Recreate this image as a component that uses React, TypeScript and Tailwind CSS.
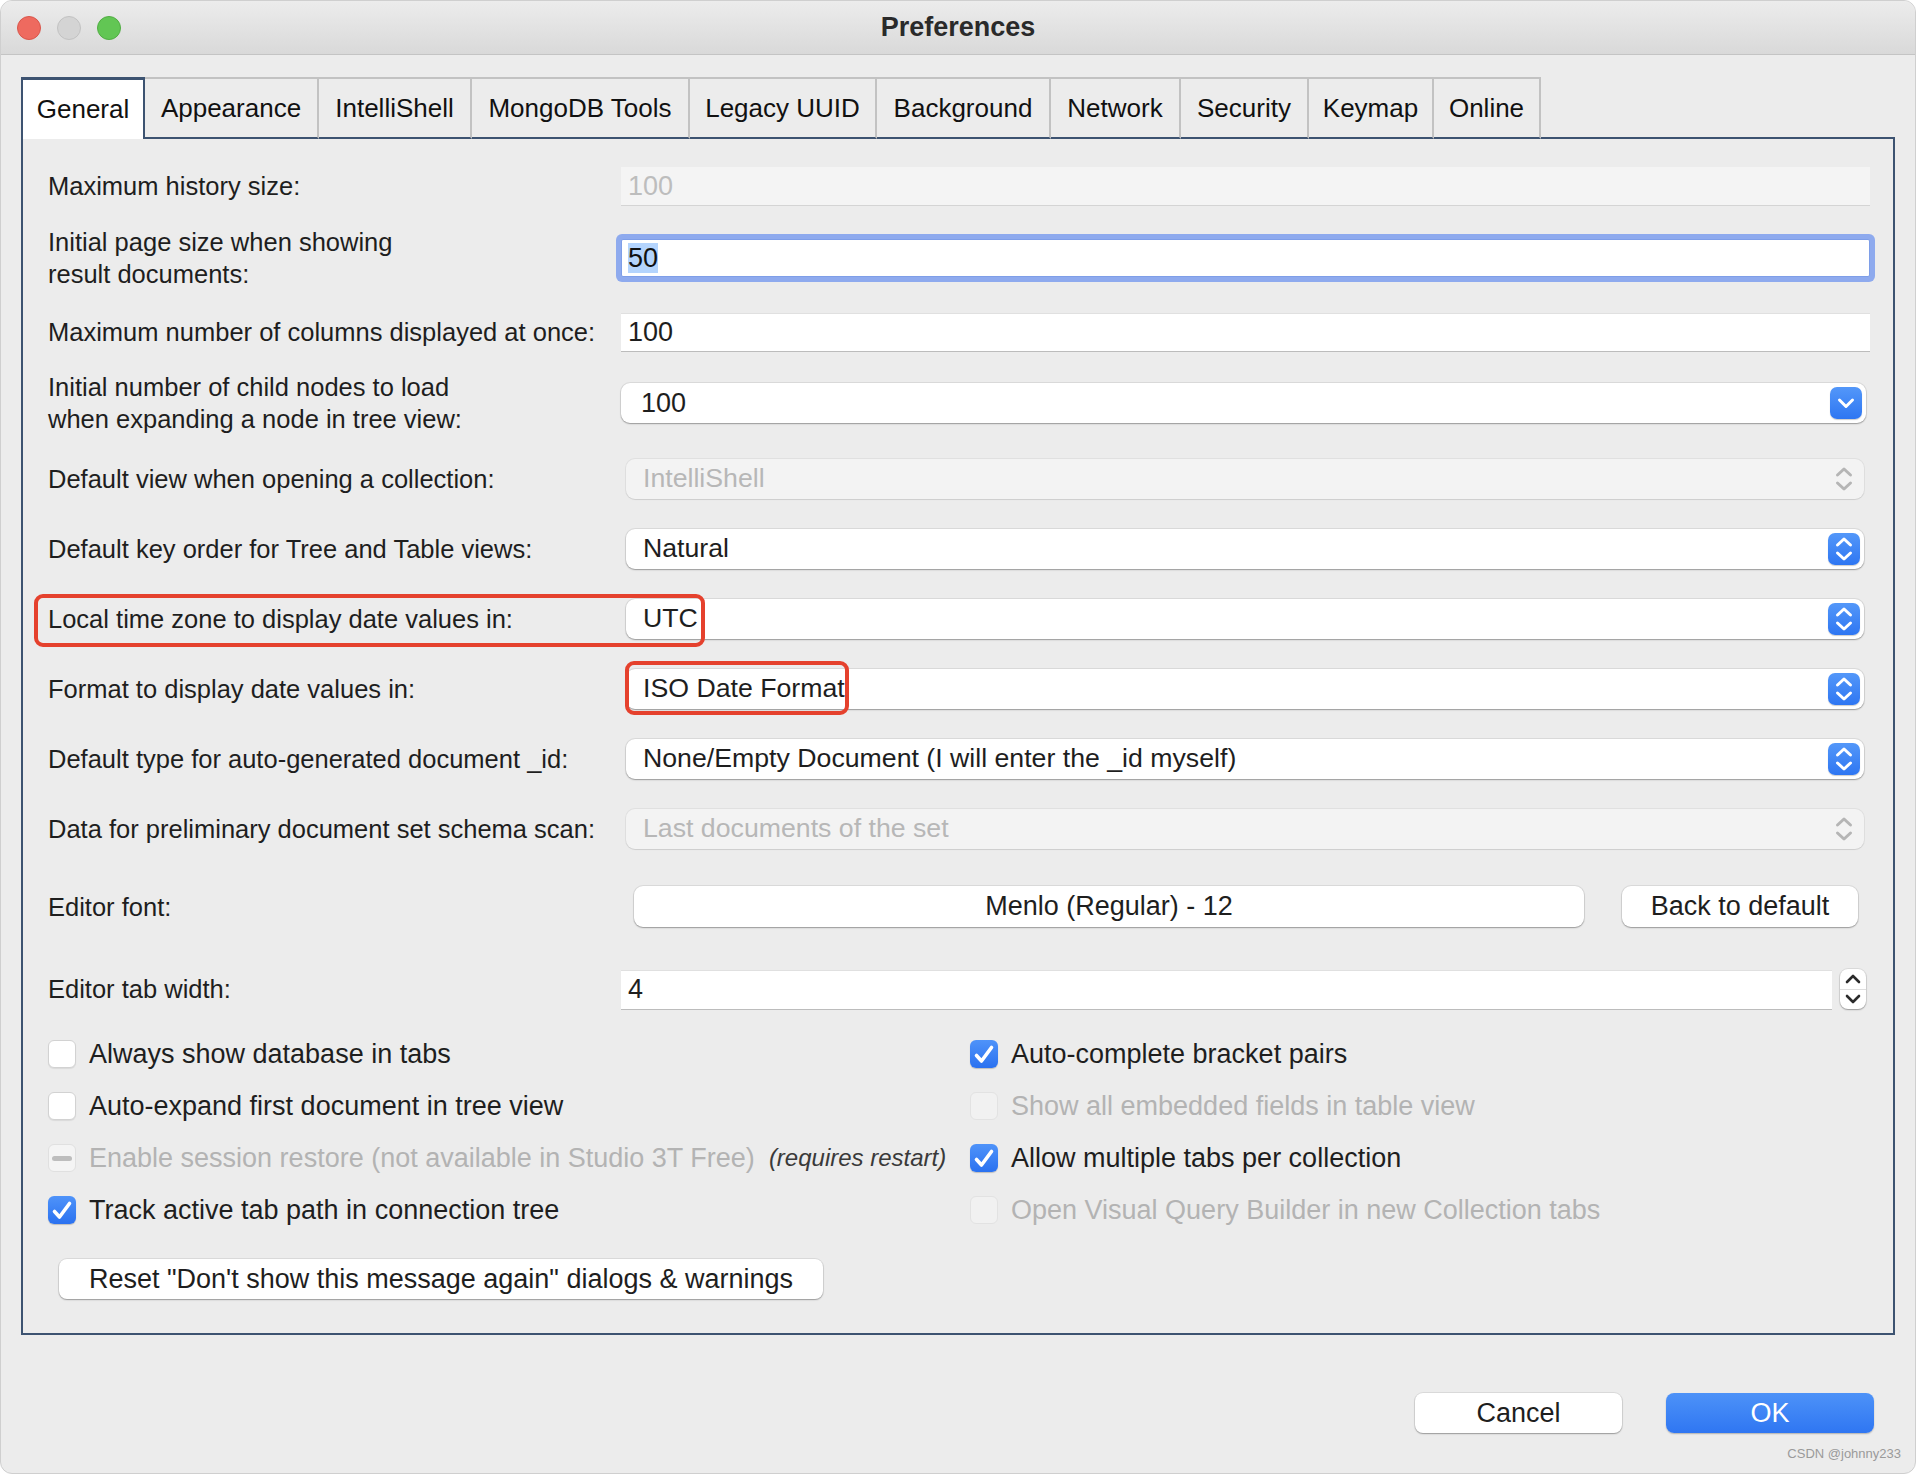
import React from 'react';

type Tab = { label: string; w: string; active?: boolean };

const tabs: Tab[] = [
  { label: 'General', w: 'w-[124px]', active: true },
  { label: 'Appearance', w: 'w-[174px]' },
  { label: 'IntelliShell', w: 'w-[153px]' },
  { label: 'MongoDB Tools', w: 'w-[218px]' },
  { label: 'Legacy UUID', w: 'w-[187px]' },
  { label: 'Background', w: 'w-[174px]' },
  { label: 'Network', w: 'w-[130px]' },
  { label: 'Security', w: 'w-[128px]' },
  { label: 'Keymap', w: 'w-[125px]' },
  { label: 'Online', w: 'w-[107px]' },
];

function UpDown({ color }: { color: string }) {
  return (
    <svg width="32" height="32" viewBox="0 0 32 32" fill="none" stroke={color} strokeWidth="3" strokeLinecap="round" strokeLinejoin="round">
      <path d="M9.5 12 L16 6 L22.5 12" />
      <path d="M9.5 20 L16 26 L22.5 20" />
    </svg>
  );
}

function BlueButton({ single }: { single?: boolean }) {
  return (
    <div className="w-[32px] h-[32px] rounded-[7px] bg-gradient-to-b from-[#5397f9] to-[#2e76f2] shadow-[0_1px_1px_rgba(0,0,0,0.2)] flex items-center justify-center">
      {single ? (
        <svg width="32" height="32" viewBox="0 0 32 32" fill="none" stroke="white" strokeWidth="3" strokeLinecap="round" strokeLinejoin="round">
          <path d="M9.5 13 L16 19.5 L22.5 13" />
        </svg>
      ) : (
        <UpDown color="white" />
      )}
    </div>
  );
}

function Label({ children }: { children: React.ReactNode }) {
  return <div className="w-[573px] shrink-0 text-[25.5px] leading-[32px] text-[#1e1e1e]">{children}</div>;
}

function Popup({ value, disabled }: { value: string; disabled?: boolean }) {
  return (
    <div
      className={
        disabled
          ? 'ml-[5px] mr-[6px] flex-1 h-[40px] rounded-[9px] flex items-center pl-[17px] pr-[4px] bg-[#f3f3f3] text-[#b7b7b7] shadow-[0_0_0_1px_rgba(0,0,0,0.05),0_1px_1px_rgba(0,0,0,0.08)]'
          : 'ml-[5px] mr-[6px] flex-1 h-[40px] rounded-[9px] flex items-center pl-[17px] pr-[4px] bg-white text-[#1e1e1e] shadow-[0_0_0_1px_rgba(0,0,0,0.07),0_1px_1.5px_rgba(0,0,0,0.3)]'
      }
    >
      <span className="flex-1 text-[26.7px] leading-[30px] mb-[3px] whitespace-nowrap">{value}</span>
      {disabled ? <UpDown color="#b5b5b5" /> : <BlueButton />}
    </div>
  );
}

type CheckState = 'off' | 'on' | 'dash' | 'disabled';

function Checkbox({ state }: { state: CheckState }) {
  if (state === 'on') {
    return (
      <div className="w-[28px] h-[28px] shrink-0 rounded-[6px] bg-gradient-to-b from-[#4f93f9] to-[#2a71f0] shadow-[0_1px_1px_rgba(0,0,0,0.2)] flex items-center justify-center">
        <svg width="28" height="28" viewBox="0 0 28 28" fill="none" stroke="white" strokeWidth="3.6" strokeLinecap="round" strokeLinejoin="round">
          <path d="M6.5 15.5 L11.5 21 L21.5 7.5" />
        </svg>
      </div>
    );
  }
  if (state === 'dash') {
    return (
      <div className="w-[28px] h-[28px] shrink-0 rounded-[6px] bg-[#f4f4f4] border border-[#e0e0e0] flex items-center justify-center">
        <div className="w-[20px] h-[5px] rounded-full bg-[#bdbdbd]" />
      </div>
    );
  }
  if (state === 'disabled') {
    return <div className="w-[28px] h-[28px] shrink-0 rounded-[6px] bg-[#f1f1f1] border border-[#e2e2e2]" />;
  }
  return <div className="w-[28px] h-[28px] shrink-0 rounded-[6px] bg-white border border-[#d2d2d2] shadow-[0_1px_1px_rgba(0,0,0,0.08)]" />;
}

function CheckRow({ state, text, muted, extra }: { state: CheckState; text: string; muted?: boolean; extra?: string }) {
  return (
    <div className="h-[52px] flex items-center gap-[13px]">
      <Checkbox state={state} />
      <span className={muted ? 'text-[27px] text-[#b3b3b3] whitespace-nowrap' : 'text-[27px] text-[#1e1e1e] whitespace-nowrap'}>{text}</span>
      {extra && <span className="ml-[1px] text-[24px] italic text-[#3a3a3a] whitespace-nowrap">{extra}</span>}
    </div>
  );
}

function TrafficLights() {
  return (
    <div className="flex items-center gap-[16px] pl-[16px]">
      <div className="w-[24px] h-[24px] rounded-full bg-[#ee6a5f] border border-[#d9564b]" />
      <div className="w-[24px] h-[24px] rounded-full bg-[#d4d4d4] border border-[#c2c2c2]" />
      <div className="w-[24px] h-[24px] rounded-full bg-[#62c654] border border-[#51ad43]" />
    </div>
  );
}

export default function App() {
  return (
    <div className="w-[1916px] h-[1474px] bg-white font-['Liberation_Sans',Arial,sans-serif]">
      <div className="relative w-full h-full rounded-[12px] overflow-hidden bg-[#ececec] border border-[#cfcfcf] flex flex-col">
        {/* title bar */}
        <div className="relative h-[54px] shrink-0 bg-gradient-to-b from-[#ececec] to-[#d9d9d9] border-b border-[#c4c4c4] flex items-center">
          <TrafficLights />
          <div className="absolute inset-0 flex items-center justify-center text-[27px] font-bold text-[#2a2a2a]">Preferences</div>
        </div>

        {/* tabs */}
        <div className="mt-[22px] mx-[20px] flex items-end">
          {tabs.map((t) =>
            t.active ? (
              <div
                key={t.label}
                className={`${t.w} h-[62px] shrink-0 bg-white border-t-[3px] border-x-2 border-[#3d5371] flex items-center justify-center text-[26px] text-[#111]`}
              >
                {t.label}
              </div>
            ) : (
              <div
                key={t.label}
                className={`${t.w} h-[62px] shrink-0 border-t-2 border-r-2 border-t-[#c2c2c2] border-r-[#c2c2c2] border-b-2 border-b-[#3d5371] flex items-center justify-center text-[26px] text-[#111]`}
              >
                {t.label}
              </div>
            )
          )}
          <div className="flex-1 h-[62px] border-b-2 border-[#3d5371]" />
        </div>

        {/* panel */}
        <div className="mx-[20px] border-x-2 border-b-2 border-[#3d5371] pl-[25px] pr-[23px] pt-[28px] pb-[34px]">
          <div className="h-[38px] flex items-center">
            <Label>Maximum history size:</Label>
            <div className="flex-1 h-[38px] bg-[#f4f4f4] shadow-[0_1px_0_#d4d4d4] flex items-center pl-[7px] text-[27px] text-[#bdbdbd]">100</div>
          </div>

          <div className="mt-[28px] h-[50px] flex items-center">
            <Label>
              Initial page size when showing
              <br />
              result documents:
            </Label>
            <div className="flex-1 h-[38px] bg-white rounded-[2px] border border-[#7e9ee8] shadow-[0_0_0_5px_#8eaaee] flex items-center pl-[6px] text-[27px] text-[#111]">
              <span className="bg-[#b4d4fd] leading-[30px]">50</span>
            </div>
          </div>

          <div className="mt-[30px] h-[38px] flex items-center">
            <Label>Maximum number of columns displayed at once:</Label>
            <div className="flex-1 h-[38px] bg-white border-t border-[#e0e0e0] shadow-[0_1px_0_#bcbcbc] flex items-center pl-[7px] text-[27px] text-[#1e1e1e]">100</div>
          </div>

          <div className="mt-[32px] h-[40px] flex items-center">
            <Label>
              Initial number of child nodes to load
              <br />
              when expanding a node in tree view:
            </Label>
            <div className="mr-[4px] flex-1 h-[40px] rounded-[9px] bg-white shadow-[0_0_0_1px_rgba(0,0,0,0.07),0_1px_1.5px_rgba(0,0,0,0.3)] flex items-center pl-[20px] pr-[4px]">
              <span className="flex-1 text-[27px] text-[#1e1e1e]">100</span>
              <BlueButton single />
            </div>
          </div>

          <div className="mt-[36px] h-[40px] flex items-center">
            <Label>Default view when opening a collection:</Label>
            <Popup value="IntelliShell" disabled />
          </div>

          <div className="mt-[30px] h-[40px] flex items-center">
            <Label>Default key order for Tree and Table views:</Label>
            <Popup value="Natural" />
          </div>

          <div className="relative mt-[30px] h-[40px] flex items-center">
            <Label>Local time zone to display date values in:</Label>
            <Popup value="UTC" />
            <div className="absolute left-[-14px] top-[-5px] w-[671px] h-[53px] rounded-[9px] border-[4px] border-[#e5412d]" />
          </div>

          <div className="relative mt-[30px] h-[40px] flex items-center">
            <Label>Format to display date values in:</Label>
            <Popup value="ISO Date Format" />
            <div className="absolute left-[577px] top-[-8px] w-[224px] h-[54px] rounded-[9px] border-[4px] border-[#e5412d]" />
          </div>

          <div className="mt-[30px] h-[40px] flex items-center">
            <Label>Default type for auto-generated document _id:</Label>
            <Popup value="None/Empty Document (I will enter the _id myself)" />
          </div>

          <div className="mt-[30px] h-[40px] flex items-center">
            <Label>Data for preliminary document set schema scan:</Label>
            <Popup value="Last documents of the set" disabled />
          </div>

          <div className="mt-[37px] h-[41px] flex items-center">
            <Label>Editor font:</Label>
            <div className="ml-[13px] flex-1 h-[41px] rounded-[9px] bg-white shadow-[0_0_0_1px_rgba(0,0,0,0.07),0_1px_1.5px_rgba(0,0,0,0.3)] flex items-center justify-center text-[27px] text-[#1e1e1e]">
              Menlo (Regular) - 12
            </div>
            <div className="ml-[38px] mr-[12px] w-[236px] h-[41px] rounded-[9px] bg-white shadow-[0_0_0_1px_rgba(0,0,0,0.07),0_1px_1.5px_rgba(0,0,0,0.3)] flex items-center justify-center text-[27px] text-[#1e1e1e]">
              Back to default
            </div>
          </div>

          <div className="mt-[42px] h-[40px] flex items-center">
            <Label>Editor tab width:</Label>
            <div className="flex-1 h-[39px] bg-white border-t border-[#e0e0e0] shadow-[0_1px_0_#bcbcbc] flex items-center pl-[7px] text-[27px] text-[#1e1e1e]">4</div>
            <div className="ml-[8px] mr-[4px] w-[26px] h-[40px] rounded-[8px] bg-white shadow-[0_0_0_1px_rgba(0,0,0,0.07),0_1px_1.5px_rgba(0,0,0,0.3)] flex flex-col">
              <div className="flex-1 flex items-center justify-center border-b border-[#dedede]">
                <svg width="16" height="10" viewBox="0 0 16 10" fill="none" stroke="#2b2b2b" strokeWidth="2.6" strokeLinecap="round" strokeLinejoin="round">
                  <path d="M2 8 L8 2 L14 8" />
                </svg>
              </div>
              <div className="flex-1 flex items-center justify-center">
                <svg width="16" height="10" viewBox="0 0 16 10" fill="none" stroke="#2b2b2b" strokeWidth="2.6" strokeLinecap="round" strokeLinejoin="round">
                  <path d="M2 2 L8 8 L14 2" />
                </svg>
              </div>
            </div>
          </div>

          <div className="mt-[19px] grid grid-cols-[922px_1fr]">
            <CheckRow state="off" text="Always show database in tabs" />
            <CheckRow state="on" text="Auto-complete bracket pairs" />
            <CheckRow state="off" text="Auto-expand first document in tree view" />
            <CheckRow state="disabled" text="Show all embedded fields in table view" muted />
            <CheckRow state="dash" text="Enable session restore (not available in Studio 3T Free)" muted extra="(requires restart)" />
            <CheckRow state="on" text="Allow multiple tabs per collection" />
            <CheckRow state="on" text="Track active tab path in connection tree" />
            <CheckRow state="disabled" text="Open Visual Query Builder in new Collection tabs" muted />
          </div>

          <div className="mt-[23px] ml-[11px] w-[764px] h-[40px] rounded-[8px] bg-white shadow-[0_0_0_1px_rgba(0,0,0,0.07),0_1px_1.5px_rgba(0,0,0,0.3)] flex items-center justify-center text-[27px] text-[#1e1e1e] whitespace-nowrap">
            Reset "Don't show this message again" dialogs &amp; warnings
          </div>
        </div>

        {/* footer buttons */}
        <div className="mt-[58px] pr-[41px] flex justify-end gap-[44px]">
          <div className="w-[207px] h-[40px] rounded-[8px] bg-white shadow-[0_0_0_1px_rgba(0,0,0,0.07),0_1px_1.5px_rgba(0,0,0,0.3)] flex items-center justify-center text-[27px] text-[#1e1e1e]">
            Cancel
          </div>
          <div className="w-[208px] h-[40px] rounded-[8px] bg-gradient-to-b from-[#4d92f8] to-[#2f76f2] shadow-[0_1px_1.5px_rgba(0,0,0,0.25)] flex items-center justify-center text-[27px] text-white">
            OK
          </div>
        </div>

        <div className="absolute right-[14px] bottom-[10px] text-[13px] text-[#9a9a9a]">CSDN @johnny233</div>
      </div>
    </div>
  );
}
